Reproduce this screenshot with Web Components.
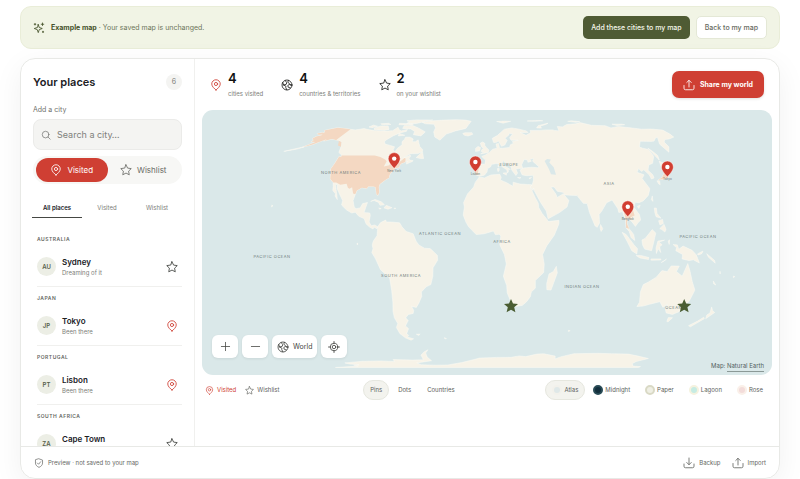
<!DOCTYPE html>
<html lang="en">
<head>
<meta charset="utf-8">
<meta name="viewport" content="width=device-width, initial-scale=1">
<title>Your places</title>
<style>
  :root {
    --red: #cf3f33; --olive: #4f5b34; --ink: #20211f; --muted: #7c7e79; --line: #f0f0ee;
    --soft: #f4f4f2; --sea: #dae8e9; --land: #f7f3e8; --tint: #f4d8c2;
  }
  * { box-sizing: border-box; }
  body { margin: 0; background: #fff; color: var(--ink); font: 7px/10px Inter, "Noto Sans", sans-serif; }
</style>
</head>
<body>
<places-app></places-app>

<script>
const ICONS = {
  pin: '<path d="M12 22c-3-2.600-8.500-7-8.500-12a8.500 8.500 0 0 1 17 0c0 5-5.500 9.400-8.500 12z"/><circle cx="12" cy="10" r="3.200"/>',
  star: '<path d="M12 1.500l3.200 6.700 7.300 1-5.300 5.100 1.300 7.300-6.500-3.500-6.500 3.500 1.300-7.300-5.300-5.100 7.300-1z"/>',
  globe: '<circle cx="12" cy="12" r="10"/><path d="M3.500 7l1.500 5 5 2.500-.5 2.500 2 4.500M5 12l5.500-1.500 1-3L8.500 3M15 2.800l-1.500 3.200 7 7.500M21.500 12l-5-1-3 2 1 3.500 4 1.300"/>',
  search: '<circle cx="11" cy="11" r="8"/><path d="M17 17l5 5"/>',
  share: '<path d="M12 16V3M7.500 7L12 2.500 16.500 7M2 13v5.500a3 3 0 0 0 3 3h14a3 3 0 0 0 3-3V13"/>',
  download: '<path d="M12 2v13M7.500 11l4.500 4.500 4.500-4.500M2 14v4.500a3 3 0 0 0 3 3h14a3 3 0 0 0 3-3V14"/>',
  plus: '<path d="M12 3v18M3 12h18"/>',
  minus: '<path d="M3 12h18"/>',
  target: '<circle cx="12" cy="12" r="7.500"/><circle cx="12" cy="12" r="3.500"/><path d="M12 1v3.500M12 19.500V23M1 12h3.500M19.500 12H23"/>',
  shield: '<path d="M12 2l8.500 3v7c0 5-4 8.500-8.500 10.500C7.500 20.500 3.500 17 3.500 12V5z"/><path d="M8 12l3 3 5-6"/>',
  sparkle: '<path d="M10.500 5l2 6 6 2-6 2.200-2 6-2-6-6-2.200 6-2z"/><path d="M19 2v5M16.500 4.500h5M4 3v3M2.500 4.500h3M20 18.500v2.500M18.800 19.800h2.500"/>'
};

/* Coastlines as longitude,latitude pairs. */
const LAND = {
  northAmerica: "-168,65.6 -164,66.5 -162,66 -163.5,67.5 -166,68.3 -163,69.5 -157,71.3 -150,70.6 -141,69.6 -135,69 -128,70.3 -124,69.6 -115,68.3 -108,68 -101,67.8 -96,68.2 -94,71.8 -90,69 -87,68 -82,69.5 -81.5,67.5 -86,66.3 -91,63.5 -94.5,60 -94.5,58.7 -92.5,57 -87,56 -82.3,55 -82,52.9 -79.5,51.3 -79,54 -76.7,56.5 -78.5,58.8 -77.5,60.5 -78,62.4 -73.5,62.4 -69.6,61 -69,58.8 -66,58.7 -64.5,60.3 -62,57.5 -60,55.2 -56,52.8 -56,51.5 -59,50.3 -65,50.2 -67,49.3 -70,47.3 -65,49.2 -64.3,48.5 -65,47.2 -64,46 -61,45.7 -61,45.3 -65.5,43.5 -66,44.5 -64.8,45.3 -67,44.9 -70,43.7 -70.7,42 -70,41.6 -74,40.7 -74,39.5 -75.5,38 -76,36.8 -75.6,35.3 -77.5,34.3 -79,33.2 -81.3,31.5 -81.4,30 -80.1,27 -80.4,25.2 -81.8,26 -82.8,28 -84,30 -86,30.3 -89.5,30.2 -90,29.1 -94,29.6 -97,28 -97.4,25.5 -97.8,22.5 -96,19 -94.4,18.1 -91.5,18.5 -90.4,20.8 -87,21.4 -87.5,19 -88.2,16 -84,15.8 -83.4,14.5 -83.7,11 -81.8,9 -79.5,9.5 -77.3,8.5 -77.8,7.5 -80,8.3 -80.5,7.3 -83,8.3 -85.7,10 -87.5,12.8 -91.5,14 -94.5,16.2 -97,15.8 -101,17.4 -105.4,20 -105.5,22.5 -108.5,25.5 -112,28.8 -113.3,31.3 -114.8,31.5 -112.8,28.5 -110.8,25.5 -109.5,23 -112,25 -112.2,26.2 -115,28 -116,30.5 -117.2,32.6 -120.6,34.6 -122.5,37.7 -124.3,40.4 -124,44 -124.6,48.4 -122.5,48 -123,49.2 -127.5,51 -130,55 -134,58.5 -139,59.8 -146,60.8 -151.5,59.3 -151,61 -154,59 -158,56.5 -164,54.7 -158,58.5 -162,58.7 -162,60 -165,61.2 -164.5,63 -161,64 -161,64.6 -165,64.5",
  southAmerica: "-77.3,8.5 -75.5,10.7 -72,12 -71.5,11 -68,11 -62,10.6 -60,8.3 -57,6 -52,4.8 -50,1 -48,-1 -44,-2.7 -40,-2.9 -37,-5 -35,-6.5 -35,-9 -38.5,-13 -39,-17.5 -41,-22 -44.5,-23.2 -48.5,-26 -48.8,-28.5 -52,-32.5 -54.5,-34.8 -58,-34.2 -57,-36.5 -58,-38.3 -62,-39 -65,-41 -63.7,-42.7 -67.5,-46 -65.8,-47.8 -69,-51 -68.3,-52.5 -70,-53.5 -65.2,-54.7 -68,-55.7 -72,-54 -75,-51 -75.5,-47 -73,-44.5 -74,-41 -73.3,-37 -71.5,-32 -70.3,-25 -70.3,-18.4 -76,-14 -79,-8 -81.2,-5 -80.3,-3 -80.8,-1 -80,1 -77.5,3.8 -77.3,7",
  africa: "-6,35.8 -2,35.2 3,36.9 10,37.3 11,35.5 10.3,34 15,32.4 19.5,30.4 20,32.7 25,31.7 31,31.4 34.2,31.3 32.5,30 35.5,24 37.3,21 37.3,18.7 39.5,15.5 43,12 43.3,11.2 51.2,11.9 51,10 47.5,4.2 42,-1.5 39.2,-6 40.6,-11 40.6,-15.5 35,-19.8 35.5,-24 32.8,-26 32.5,-28.5 30,-31.5 27,-33.7 22,-34.2 19.5,-34.7 18.3,-33.5 18,-31.5 15,-26.5 14.4,-22.5 11.8,-17.5 13.7,-11 12.3,-6 9,-1 9.7,3.7 8.5,4.6 6,4.3 4.5,6.3 -2,4.8 -7.6,4.4 -13,8.5 -15,11 -17,14.7 -16.3,19 -17,21.3 -14.5,26 -10,30 -9,32.6",
  eurasia: "-9.4,38.7 -8.8,37 -6,36.2 -2,36.8 0,38.6 0.5,40.7 3.2,42 3.5,43.3 7.5,43.8 10.2,43.5 12.2,41.8 15.7,40 16,38 17,39 16.8,40.5 18.5,40.2 14,42.5 12.4,44.5 13.5,45.6 15.5,43.8 19.4,42 19.5,40 22.5,36.6 24,38 23,40.4 26,40.8 28.5,41 28,43 30,45.5 31,46.5 33.5,46 33.5,44.6 36.5,45.3 35.5,46.5 39,47.2 37.5,45.3 41.5,42 41,41.2 36,41.6 31.5,41.3 29,41.1 26.2,39.8 27.3,37 30.5,36.5 36,36.7 35.7,34 34.3,31.4 32.6,30 34.3,28 35,29.5 35.2,28 39,21.5 42.6,16.8 43.5,12.7 52,16 57.8,19 59.8,22.5 56.4,26.2 51.6,24.2 51,26 48,30 50.5,30 52.5,27.5 56.5,27 57.3,25.6 66.5,25.2 67.5,23.8 70,21 72.8,20.8 73.5,16 76.5,8.9 78,8.2 79.8,10.5 80.2,15 82.5,16.8 87,21.3 91.5,22.8 94.3,18 94.5,16 97.3,16.5 98.5,12 98.3,8 100.3,6 101.5,2.8 104,1.3 103.4,4.5 100.5,7.5 99.3,10 100,13.4 101,12.7 103,11 105,8.7 107,10.5 109.3,12 109,15 106,18.8 108,21.6 110.5,21.3 114,22.3 119,25.3 122,29 119.5,34.8 122.5,37 118,38.5 121,40.8 122,39 124.5,40 126.5,37 126.5,34.5 129,35.2 129.3,37 127.6,39.7 131,43 135,44 140.5,48.5 141.3,53 137.5,54 135.5,54.8 142,59.2 152,59 155,59.3 160,61.7 163,62.3 156.5,57 156.7,51.2 162,55 163,58.5 167,60.5 172,61 179,62.5 179.9,65 179.9,68.8 170,69.9 160,69.7 152,70.9 140,72.6 130,71 127,73.5 113,74 104,77.7 98,76 87,75 80,72.2 75,72.7 73,68 69,68.5 68,69 60,69 54,68.5 44,68.5 43.5,66.3 38,64 33,66.6 41,66.4 40,68 32,70 26,71 18,69.7 13,66 10,63.7 5,61.5 6,58.3 8,58.1 10.7,59.3 12,57 13,55.4 16,56.3 18.8,59.8 17.2,61.5 21.5,64.5 22,65.8 25.3,65 21.5,62 22.5,60 29.5,60 23.5,59 24,57.5 21,56.5 20,54.6 14,54 11,54 10.5,57.5 8.2,57 8.8,54 5,53.3 2,51 -1.5,49.3 -4.5,48.4 -1.2,46 -1.7,43.4 -8,43.7 -9.2,43",
  aleutians: "-163,54.9 -166,53.6 -170,52.8 -176,51.8 -170,53.3 -165,54.6",
  britain: "-5.5,50.1 1,51 1.7,52.7 -0.5,54.5 -2,56 -2,57.6 -4,58.6 -6,57.8 -5,55 -3,54 -4.5,53 -5,51.8 -3,51.4",
  ireland: "-10,51.8 -6.3,52.2 -5.8,54.5 -8,55.2 -10,54",
  iceland: "-24,65.5 -22,64 -18.5,63.4 -14,64.8 -15,66.3 -22,66.3",
  greenland: "-73,78.2 -68,76 -58,75.5 -54,71 -53.500,67 -50,62.500 -44,60 -40,65 -32,68 -22,70.500 -20,75 -18,80 -25,82.5 -35,83.5 -50,82.5 -62,81",
  baffin: "-89,73.5 -80,73.7 -72,71 -62,67 -64,63.5 -72,64.5 -73,67.5 -79,70 -88,70.5",
  ellesmere: "-92,81 -82,83 -63,82.8 -70,80 -78,76.4 -89,76.5 -87,79",
  victoria: "-118,71 -114,73.2 -106,73.3 -101,69.5 -105,68.6 -116,69.2",
  banks: "-125,72 -123,74.3 -117,73 -121,71.300",
  melville: "-117,76 -109,76.7 -105,75 -114,74.7",
  devon: "-97,76.7 -81,75.8 -81,74.600 -96,74.8",
  southampton: "-87,65.700 -80,64 -86,63.500",
  svalbard: "11,79.5 20,80.4 27,80 18,76.8",
  franzJosef: "46,80.5 60,81.8 64,80.9 55,80.2",
  novaya: "52,71 55,73.500 68,77 66,75.800 57,73 57,70.800",
  severnaya: "92,80 97,81 105,79.2 100,78.200",
  newSiberian: "137,75.5 148,75.4 150,74.8 140,73.700",
  honshu: "131,33.8 135.5,35.6 139,38 140,41.3 142,39.5 140.8,35.7 137,34.6 133,34.2",
  kyushu: "130,33.5 132,33.3 131,31.2 130.2,31.8",
  hokkaido: "140,42 141.700,45.4 145.3,43.4 143,42",
  sakhalin: "142,54 143.300,52 144.5,49 142.5,46 142,49",
  taiwan: "120.200,23 121.8,25 121,22",
  hainan: "108.7,19.3 111,20 109.5,18.2",
  luzon: "120.3,16 120.7,18.5 122.2,18.4 121.8,15.500 124,13 120.7,13.8",
  visayas: "122,11.7 125,12.4 125,10.2 122.500,9.500",
  mindanao: "122,7.5 125.5,9.8 126.5,7 125.4,5.700 123.500,7",
  borneo: "109,1.5 111.5,2.5 116.7,7 119,5.2 117.500,1 116,-4 111,-3.2 109.5,-1",
  sumatra: "95.3,5.6 98,4.5 103.5,-1 106,-3 105.7,-5.8 102,-4 98.500,1",
  java: "105.300,-6.6 108.500,-6.5 114.4,-7.6 114.3,-8.7 108,-7.8",
  lesserSunda: "116,-8.3 123,-8.3 123,-8.9 116,-9",
  timor: "123.6,-10.2 127,-8.4 125,-9.700",
  sulawesi: "119.5,-5.5 119,-2.500 120.3,1 125,1.5 121,0.4 123.3,-0.9 121.500,-2 122.5,-5 120.5,-3",
  halmahera: "127.500,1 128.500,1.700 128.200,-0.8",
  newGuinea: "131,-0.8 134,-1 135,-3.3 138,-1.6 144.5,-3.8 147.7,-6.2 150.7,-10.5 146,-8.8 143,-9.2 138,-8.3 138,-6 133,-4 133.500,-2.500",
  newBritain: "148.500,-5.7 152.200,-4.2 151.500,-5.6 149,-6.300",
  solomon: "155,-5.6 161,-9 162,-10.600 156.500,-7.5",
  caledonia: "164,-20 167,-22.3 165,-21.600",
  fiji: "177.300,-17.4 178.500,-17.700 177.700,-18.300",
  vanuatu: "166.600,-14.8 167.5,-16.3 167,-16",
  australia: "114,-22 117,-20.7 122,-18 125,-14.5 129,-15 131,-12 136.8,-12.1 135.5,-15 140.5,-17.5 142.5,-10.8 145.3,-15 149,-20.5 153.2,-25 153,-31 150,-37.3 146.3,-39 140.5,-38 138,-35.5 137.7,-33 135.500,-34.8 131,-31.5 124,-33 120,-34 115.2,-34.3 115.7,-31.8 113.5,-26",
  tasmania: "144.7,-40.8 148.2,-41 147,-43.5 145.8,-43.2",
  northIsland: "172.8,-34.5 175.5,-36.6 178.4,-37.8 175.3,-41.5 173.8,-39.3 174.9,-38",
  southIsland: "172.8,-40.6 174.2,-41.5 171,-44.5 169,-46.6 166.5,-45.9 170.500,-43",
  madagascar: "49.3,-12.2 50.4,-15.8 47.2,-25 44,-24.8 43.5,-21.5 44.5,-16.3 47.500,-15",
  sriLanka: "79.9,8 80.5,9.7 81.8,7.5 80.5,6",
  cuba: "-84.8,22 -82,23.1 -77,21.8 -74.3,20.2 -77.5,19.9 -79,21.500 -82.500,22.500",
  hispaniola: "-74.3,18.5 -73,19.9 -68.5,18.6 -71.300,17.8",
  jamaica: "-78.200,18.400 -76.300,18.200 -77.200,17.800",
  puertoRico: "-67.200,18.400 -65.700,18.300 -66.500,17.900",
  newfoundland: "-59.3,47.7 -55.7,51.5 -52.8,47 -55.500,47",
  sardinia: "8.300,40.8 9.7,40.8 9.5,39.2 8.500,39",
  corsica: "8.700,42.500 9.500,42.900 9.200,41.500",
  sicily: "12.5,38 15.5,38.2 15,36.8",
  crete: "23.6,35.500 26.300,35.300 25,34.9",
  cyprus: "32.3,35 34.500,35.6 33,34.6",
  falkland: "-61,-51.6 -57.8,-51.500 -59.500,-52.300",
  southGeorgia: "-38,-54 -36,-54.500 -36.500,-54.900",
  kerguelen: "68.800,-48.800 70.500,-49.200 69.200,-49.700",
  galapagos: "-91.500,0 -90.700,-0.400 -91.300,-1",
  hawaii: "-156,20.200 -154.900,19.500 -155.700,19",
  antarctica: "-180,-89 -165,-85 -150,-83 -153,-81 -146,-80 -155,-78.5 -158,-77 -148,-76 -136,-74.8 -115,-74.3 -101,-75 -100,-72.600 -80,-73.300 -68,-73 -67,-68 -62,-65 -57,-63.2 -61,-66 -62,-70 -60,-74 -78,-77 -75,-80 -60,-81 -45,-80.500 -35,-78 -28,-76.500 -15,-73 -8,-71 10,-70.3 25,-70.2 33,-68.8 40,-69.500 50,-67 57,-66.800 70,-69 72,-72 76,-69.8 87,-66.7 110,-66.3 125,-66.7 142,-67 155,-69 170,-71.500 163,-75 163,-78 170,-83 180,-84.5 180,-90 -180,-90"
};
const VISITED = {
  states: "-123,49 -110,49 -95,49 -89.5,48 -84.6,46.5 -82.5,45.3 -83,42 -79,42.8 -79,43.4 -76.5,44 -75,45 -71.5,45 -70,46.5 -69,47.4 -67.8,47 -67,44.9 -70,43.7 -70.7,42 -70,41.6 -74,40.7 -74,39.5 -75.5,38 -76,36.8 -75.6,35.3 -77.5,34.3 -79,33.2 -81.3,31.5 -81.4,30 -80.1,27 -80.4,25.2 -81.8,26 -82.8,28 -84,30 -86,30.3 -89.5,30.2 -90,29.1 -94,29.6 -97,28 -97.4,25.9 -99.2,26.4 -101.4,29.8 -103,29 -104.5,29.6 -106.5,31.8 -111,31.3 -114.8,32.5 -117.1,32.6 -120.6,34.6 -122.5,37.7 -124.3,40.4 -124,44 -124.6,48.4 -122.5,48",
  alaska: "-168,65.6 -164,66.5 -162,66 -163.5,67.5 -166,68.3 -163,69.5 -157,71.3 -150,70.6 -141,69.6 -141,60.3 -137,59 -134,56 -130,55 -134,58.5 -139,59.8 -146,60.8 -151.5,59.3 -151,61 -154,59 -158,56.5 -164,54.7 -158,58.5 -162,58.7 -162,60 -165,61.2 -164.5,63 -161,64 -161,64.6 -165,64.5",
  japan: "131,33.8 135.5,35.6 139,38 140,41.3 142,39.5 140.8,35.7 137,34.6 133,34.2",
  thailand: "98,19 100.500,20 102,18 105,17.500 105.500,14.500 102.500,13.500 102.300,12 101,12.700 100,13.4 99.3,10 100.5,7.5 98.3,8 98.8,12 98.3,16",
  portugal: "-8.800,42 -6.500,41.900 -7.300,37.200 -8.8,37 -9.4,38.7"
};
const WATER = {
  caspian: "47.5,45.5 50,46.7 53,46.5 51,44.5 53.5,41.5 53.8,37 50,37.3 49.3,40.3"
};
const LABELS = [
  ["NORTH AMERICA", 139, 64], ["SOUTH AMERICA", 199, 167], ["EUROPE", 307, 56], ["ASIA", 407, 75],
  ["AFRICA", 300, 133], ["OCEANIA", 474, 199], ["ATLANTIC OCEAN", 238, 125], ["INDIAN OCEAN", 380, 178],
  ["PACIFIC OCEAN", 70, 148], ["PACIFIC OCEAN", 496, 128]
];
const CITIES = [
  ["New York", -74, 40.7, true], ["Lisbon", -9.1, 38.7, true], ["Tokyo", 139.7, 35.7, true],
  ["Bangkok", 100.5, 13.75, true], ["", 18.4, -33.9, false], ["", 151.2, -33.9, false]
];

/* Equal Earth projection onto the 570 by 265 map sheet. */
function project(lon, lat) {
  const A = [1.340264, -0.081106, 0.000893, 0.003796], rad = Math.PI / 180, k = 94.5;
  const t = Math.asin(Math.sqrt(3) / 2 * Math.sin(lat * rad)), q = t * t, s = q * q * q;
  const x = 2 * Math.sqrt(3) * lon * rad * Math.cos(t) / (3 * (9 * A[3] * s * q + 7 * A[2] * s + 3 * A[1] * q + A[0]));
  const y = t * (A[3] * s * q + A[2] * s + A[1] * q + A[0]);
  return [285 + x * k, 133 - y * k];
}
const trace = (shapes) => Object.values(shapes).map((text) =>
  "M" + text.split(" ").map((pair) => project(...pair.split(",").map(Number)).map((n) => n.toFixed(1)).join(" ")).join("L") + "Z").join("");

function define(name, html) {
  const template = document.createElement("template");
  customElements.define(name, class extends HTMLElement {
    constructor() {
      super();
      template.innerHTML = `<style>*{box-sizing:border-box}button,input{font:inherit;color:inherit;margin:0}
        button{display:flex;align-items:center;justify-content:center;border:0;background:none;padding:0;white-space:nowrap}</style>` +
        (typeof html === "function" ? html((key) => this.getAttribute(key) || "") : html);
      this.attachShadow({ mode: "open" }).append(template.content.cloneNode(true));
    }
  });
}

define("ui-icon", (a) => `<style>:host{display:block;flex:none;width:var(--size,12px);height:var(--size,12px)}svg{display:block;width:100%;height:100%}</style>
  <svg viewBox="0 0 24 24" fill="none" stroke="currentColor" stroke-width="1.700" stroke-linecap="round" stroke-linejoin="round" aria-hidden="true">${ICONS[a("name")]}</svg>`);

define("example-banner", `<style>
  :host{display:flex;align-items:center;justify-content:space-between;min-height:43px;padding:0 12px;border:1px solid #e9edd8;border-radius:11px;background:#f1f4e5;color:#6c755a}
  p{display:flex;align-items:center;gap:6px;margin:0}b{color:#445129}ui-icon{color:#445129}
  div{display:flex;gap:6px}
  button{height:23px;padding:0 8px;border-radius:5px;font-weight:500}
  .add{background:var(--olive);color:#f6f8ec}.back{background:#fff;border:1px solid #e4e8d6;color:#666a5e}
  </style><p><ui-icon name="sparkle"></ui-icon><span><b>Example map</b> · Your saved map is unchanged.</span></p>
  <div><button class="add">Add these cities to my map</button><button class="back">Back to my map</button></div>`);

define("place-group", (a) => `<style>
  :host{display:block;flex:none;height:59px;padding:0 0 0 4px}
  h3{margin:0;font-size:5px;line-height:8px;font-weight:600;letter-spacing:.5px;color:#65675f}
  article{display:flex;align-items:center;height:40px;margin-top:4px;border-bottom:1px solid var(--line)}
  .code{display:grid;place-items:center;width:19px;height:19px;border-radius:50%;background:#eceee5;font-size:6px;font-weight:600;color:#58604a}
  .text{flex:1;margin-left:6px}strong{display:block;font-size:8px;line-height:11px;font-weight:600}small{display:block;min-height:9px;font-size:6px;line-height:9px;color:var(--muted)}
  ui-icon{margin-right:4px;color:#3f413d}.pin{color:var(--red)}
  </style><h3>${a("country")}</h3><article><span class="code">${a("code")}</span><div class="text"><strong>${a("city")}</strong><small>${a("note")}</small></div>
  <ui-icon class="${a("mark")}" name="${a("mark")}"></ui-icon></article>`);

define("places-sidebar", `<style>
  :host{display:flex;flex-direction:column;min-height:0;overflow:hidden;padding:14px 12px 0;border-right:1px solid var(--line)}
  header{display:flex;flex:none;align-items:center;justify-content:space-between;height:17px}
  h2{margin:0;font-size:11px;line-height:16px;font-weight:600}
  header span{display:grid;place-items:center;width:16px;height:16px;border-radius:50%;background:var(--soft);color:var(--muted)}
  label{margin:15px 0 4px;color:#70726d}
  .field{display:flex;align-items:center;gap:6px;height:31px;padding:0 7px;flex:none;border:1px solid #ebebe9;border-radius:8px;background:var(--soft);color:#70726e;--size:10px}
  input{flex:1;min-width:0;border:0;padding:0;background:none;font-size:9px;outline:0}input::placeholder{color:#7f817c;opacity:1}
  .kind{display:flex;flex:none;height:28px;margin-top:6px;padding:2px 3px;border-radius:14px;background:#f7f7f5}
  .kind button{flex:1;gap:5px;border-radius:12px;font-size:8px;color:#6a6c67}.kind .on{background:var(--red);color:#fff}
  nav{display:flex;flex:none;height:19px;margin:15px 0 17px -1px}
  nav button{flex:1;font-size:6px;color:var(--muted);border-bottom:1px solid transparent}nav .on{color:var(--ink);font-weight:600;border-color:#454743}
  </style>
  <header><h2>Your places</h2><span>6</span></header>
  <label for="city">Add a city</label>
  <div class="field"><ui-icon name="search"></ui-icon><input id="city" type="text" placeholder="Search a city…"></div>
  <div class="kind"><button class="on"><ui-icon name="pin"></ui-icon>Visited</button><button><ui-icon name="star"></ui-icon>Wishlist</button></div>
  <nav><button class="on">All places</button><button>Visited</button><button>Wishlist</button></nav>
  <slot></slot>`);

define("stat-item", (a) => `<style>
  :host{display:flex;align-items:center;gap:6px}strong{display:block;font-size:13px;line-height:15px;font-weight:600;color:#111}
  span{display:block;margin-top:3px;font-size:6px;line-height:9px;color:var(--muted);white-space:nowrap}.pin{color:var(--red)}
  </style><ui-icon class="${a("icon")}" name="${a("icon")}"></ui-icon><div><strong>${a("value")}</strong><span><slot></slot></span></div>`);

define("world-map", `<style>
  :host{display:block;position:relative;border-radius:11px;overflow:hidden;background:var(--sea)}
  svg{display:block;width:100%;height:auto}.land{fill:var(--land);stroke:#fbfaf5;stroke-width:.5}.tint{fill:var(--tint)}.water{fill:var(--sea)}
  .names{font-size:4px;letter-spacing:.5px;fill:#71807d;text-anchor:middle}.city{font-size:3px;fill:#6a7775;text-anchor:middle}
  .tools{position:absolute;left:10px;bottom:17px;display:flex;gap:4px}
  .tools button{height:23px;min-width:26px;gap:4px;border-radius:6px;background:#fff;box-shadow:0 1px 3px #00000014;color:#444642}.tools .world{padding:0 5px}
  p{position:absolute;right:8px;bottom:3px;margin:0;font-size:6px;color:#53605e}a{display:inline-block;color:inherit;text-decoration:none;border-bottom:1px solid #8b9997}
  </style>
  <svg viewBox="0 0 570 265" role="img" aria-label="World map">
  <path class="land" d="${trace(LAND)}"/><path class="tint" d="${trace(VISITED)}"/><path class="water" d="${trace(WATER)}"/>
  <g class="names">${LABELS.map(([t, x, y]) => `<text x="${x}" y="${y}">${t}</text>`).join("")}</g>
  ${CITIES.map(([name, lon, lat, seen]) => {
    const [x, y] = project(lon, lat);
    return `<g transform="translate(${x.toFixed(1)} ${y.toFixed(1)})">` + (seen
      ? `<text class="city" y="3">${name}</text><path d="M0 0C-2.500 -3 -6 -6.500 -6 -10a6 6 0 0 1 12 0C6 -6.500 2.500 -3 0 0z" fill="#d13e31" stroke="#fff" stroke-width=".5"/><circle cy="-10" r="2.200" fill="#fff"/>`
      : `<path d="M0 -7l2 4.600 5 .5-3.800 3.300 1.200 5L0 3.800l-4.400 2.600 1.200-5L-7 -1.900l5-.5z" fill="#4a5d32"/>`) + `</g>`;
  }).join("")}
  </svg>
  <div class="tools"><button aria-label="Zoom in"><ui-icon name="plus" style="--size:11px"></ui-icon></button><button aria-label="Zoom out"><ui-icon name="minus" style="--size:11px"></ui-icon></button>
  <button class="world"><ui-icon name="globe"></ui-icon>World</button><button aria-label="Locate"><ui-icon name="target"></ui-icon></button></div>
  <p>Map: <a href="#natural-earth">Natural Earth</a></p>`);

define("map-options", `<style>
  :host{display:flex;align-items:center;justify-content:space-between;height:20px;margin:5px 0 0;padding:0 2px 0 3px;font-size:6px;color:#60625d}
  div{display:flex;align-items:center}.legend{gap:9px;--size:9px}.legend span{display:flex;align-items:center;gap:3px}.red{color:var(--red)}
  button{height:20px;padding:0 6px;gap:2px;border:1px solid transparent;border-radius:10px}.modes{gap:2px}.themes{gap:1px}
  .on{background:#f3f3ee;border-color:#e6e7df}i{width:10px;height:10px;border-radius:50%;border:2px solid var(--rim);background:var(--fill)}
  </style>
  <div class="legend"><span class="red"><ui-icon name="pin"></ui-icon>Visited</span><span><ui-icon name="star"></ui-icon>Wishlist</span></div>
  <div class="modes"><button class="on">Pins</button><button>Dots</button><button>Countries</button></div>
  <div class="themes"><button class="on"><i style="--rim:#f2f1eb;--fill:#dfe8e8"></i>Atlas</button><button><i style="--rim:#294b56;--fill:#122e3c"></i>Midnight</button>
  <button><i style="--rim:#d9d9c5;--fill:#efefe4"></i>Paper</button><button><i style="--rim:#f5f2df;--fill:#c6ece3"></i>Lagoon</button><button><i style="--rim:#faf0e9;--fill:#f3dcda"></i>Rose</button></div>`);

define("app-footer", `<style>
  :host{display:flex;align-items:center;justify-content:space-between;height:32px;padding:0 13px;border-top:1px solid #e8e9e6;font-size:6px;color:#666864}
  span,div,button{display:flex;align-items:center;gap:4px}div{gap:11px}
  </style><span><ui-icon name="shield" style="--size:10px"></ui-icon>Preview · not saved to your map</span>
  <div><button><ui-icon name="download"></ui-icon>Backup</button><button><ui-icon name="share"></ui-icon>Import</button></div>`);

define("places-app", `<style>
  :host{display:flex;flex-direction:column;gap:9px;height:100vh;padding:6px 20px 0}
  .card{display:grid;grid-template:minmax(0,1fr) auto / 174px minmax(0,1fr);flex:1;min-height:0;overflow:hidden;border:1px solid #e8e9e6;border-radius:15px;background:#fff}
  .shell{display:flex;flex:1;min-height:0;border-radius:15px;box-shadow:0 8px 30px #0000000f}
  main{min-width:0;padding:0 7px}app-footer{grid-column:1/-1}
  .top{display:flex;align-items:center;justify-content:space-between;height:51px;padding:0 8px}.stats{display:flex;gap:18px}
  .share{height:27px;padding:0 11px;gap:5px;border-radius:7px;background:var(--red);color:#fff;font-weight:700;box-shadow:0 1px 3px #0000001f}
  </style>
  <example-banner></example-banner>
  <div class="shell"><div class="card">
    <places-sidebar>
      <place-group country="AUSTRALIA" code="AU" city="Sydney" note="Dreaming of it" mark="star"></place-group>
      <place-group country="JAPAN" code="JP" city="Tokyo" note="Been there" mark="pin"></place-group>
      <place-group country="PORTUGAL" code="PT" city="Lisbon" note="Been there" mark="pin"></place-group>
      <place-group country="SOUTH AFRICA" code="ZA" city="Cape Town" mark="star"></place-group>
    </places-sidebar>
    <main>
      <div class="top"><div class="stats"><stat-item icon="pin" value="4">cities visited</stat-item><stat-item icon="globe" value="4">countries &amp; territories</stat-item><stat-item icon="star" value="2">on your wishlist</stat-item></div>
      <button class="share"><ui-icon name="share"></ui-icon>Share my world</button></div>
      <world-map></world-map>
      <map-options></map-options>
    </main>
    <app-footer></app-footer>
  </div></div>`);
</script>
</body>
</html>
